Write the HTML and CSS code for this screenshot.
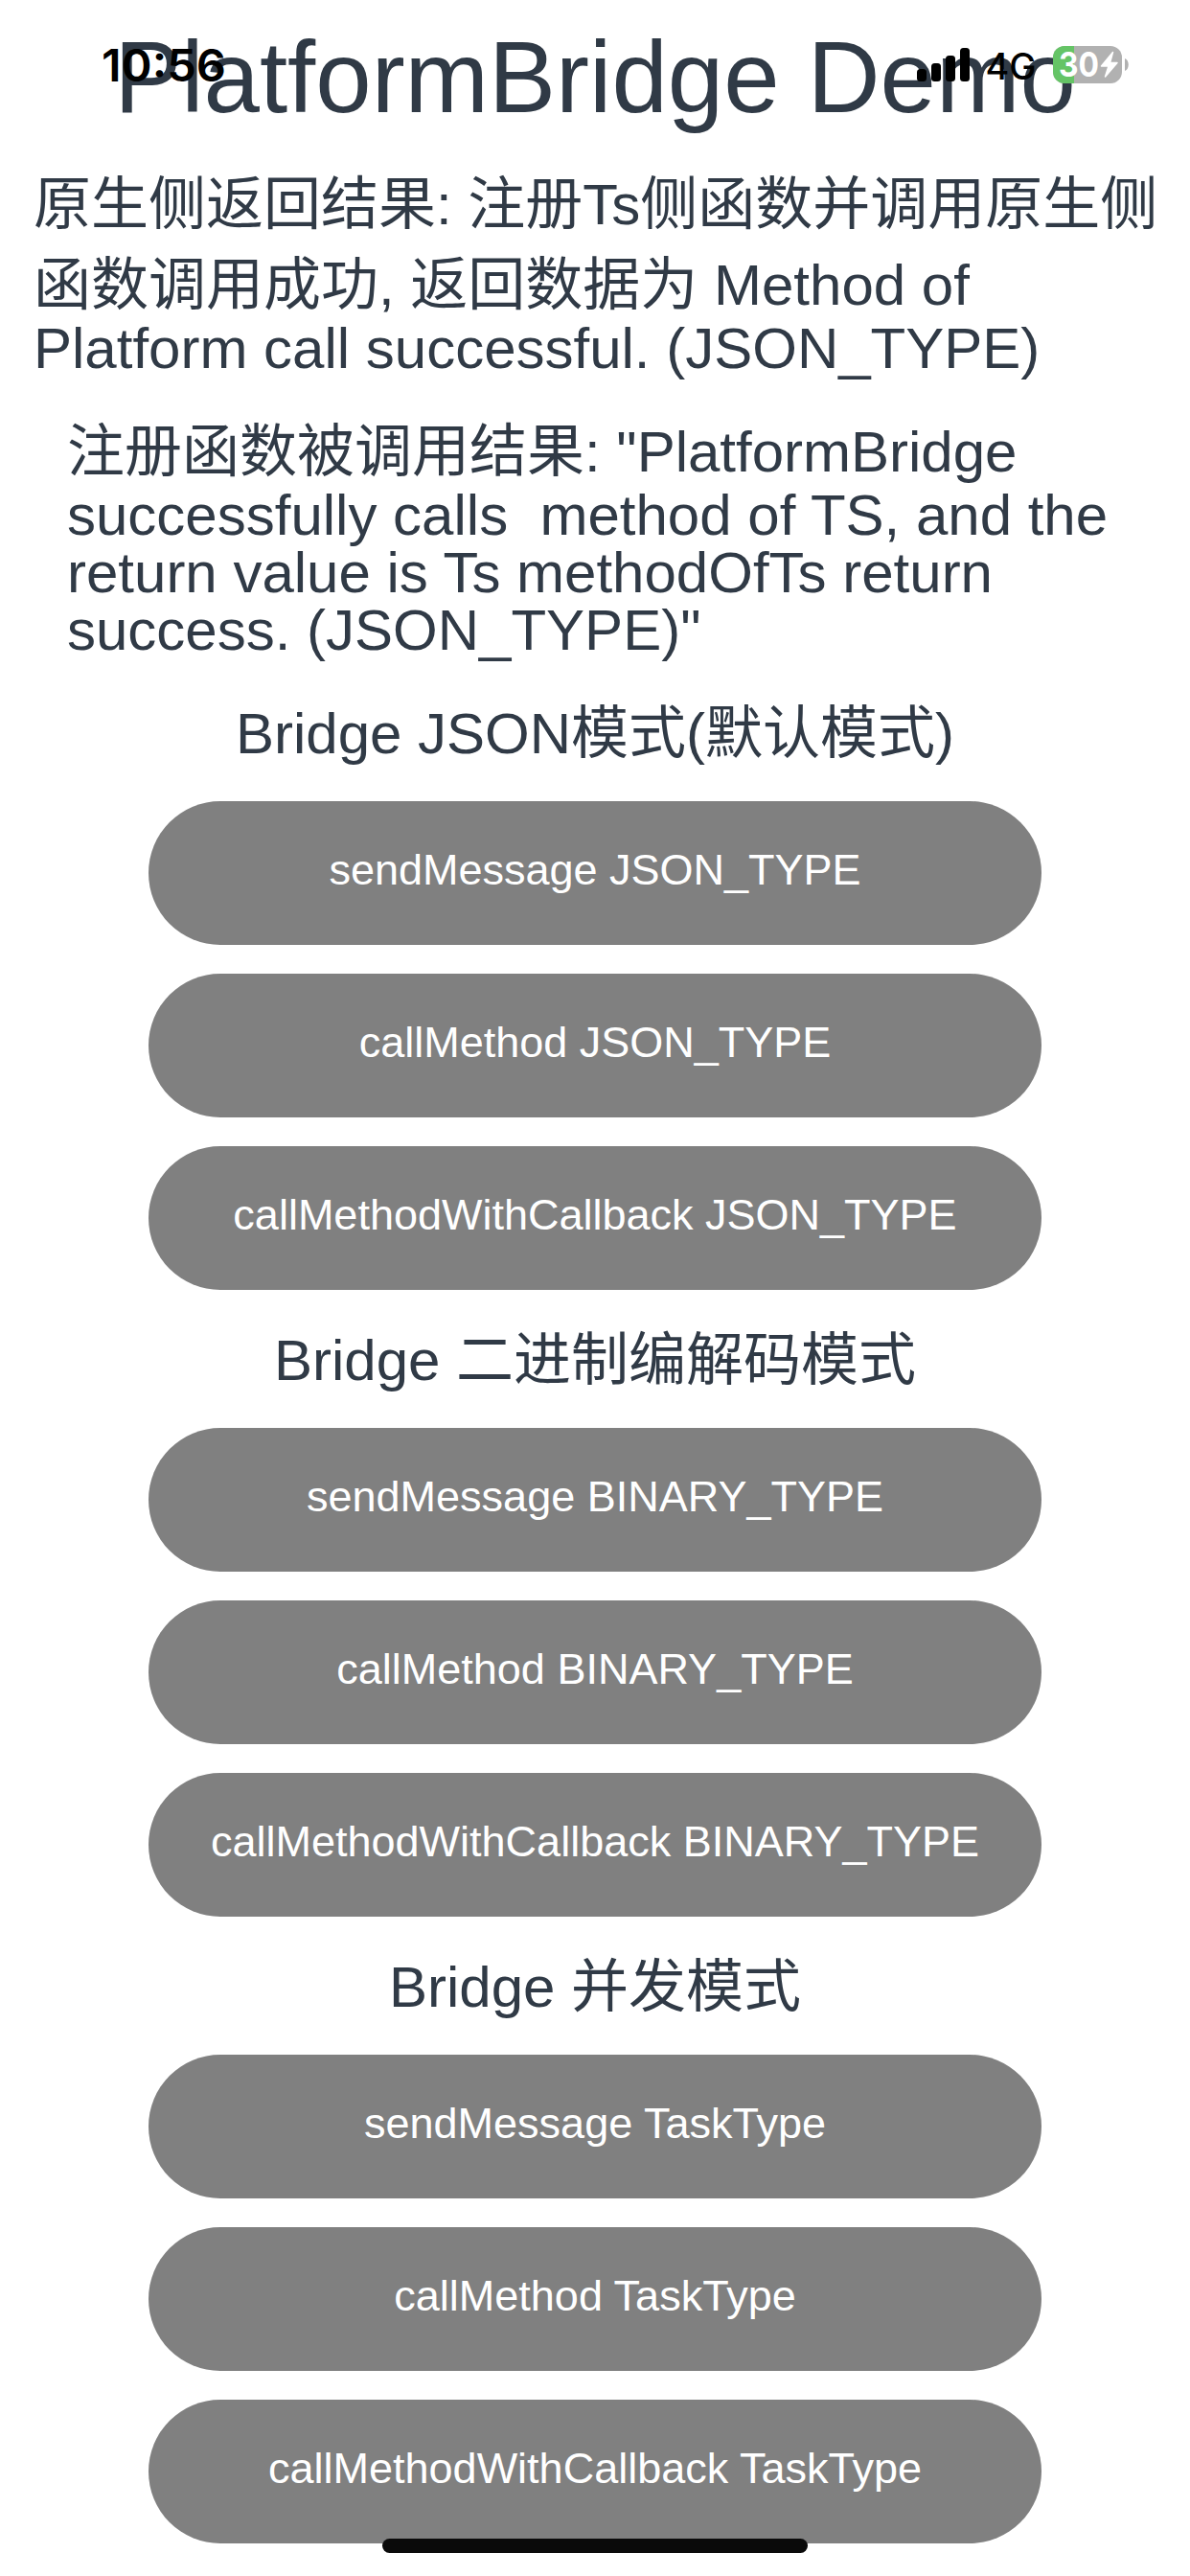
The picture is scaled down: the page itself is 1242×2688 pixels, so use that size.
FILE: index.html
```html
<!DOCTYPE html>
<html lang="zh-CN">
<head>
<meta charset="utf-8">
<title>PlatformBridge Demo</title>
<link rel="stylesheet" href="styles.css">
</head>
<body>
<main class="page">
  <h1 class="title">PlatformBridge Demo</h1>
  <p class="result result-native">
    <span class="line tall">原生侧返回结果: 注册Ts侧函数并调用原生侧</span>
    <span class="line tall">函数调用成功, 返回数据为 Method of</span>
    <span class="line short">Platform call successful. (JSON_TYPE)</span>
  </p>
  <p class="result result-ts">
    <span class="line first">注册函数被调用结果: "PlatformBridge</span>
    <span class="line">successfully calls  method of TS, and the</span>
    <span class="line">return value is Ts methodOfTs return</span>
    <span class="line">success. (JSON_TYPE)"</span>
  </p>
  <section class="group">
    <h2 class="heading">Bridge JSON模式(默认模式)</h2>
    <button class="action">sendMessage JSON_TYPE</button>
    <button class="action">callMethod JSON_TYPE</button>
    <button class="action">callMethodWithCallback JSON_TYPE</button>
  </section>
  <section class="group">
    <h2 class="heading">Bridge 二进制编解码模式</h2>
    <button class="action">sendMessage BINARY_TYPE</button>
    <button class="action">callMethod BINARY_TYPE</button>
    <button class="action">callMethodWithCallback BINARY_TYPE</button>
  </section>
  <section class="group">
    <h2 class="heading">Bridge 并发模式</h2>
    <button class="action">sendMessage TaskType</button>
    <button class="action">callMethod TaskType</button>
    <button class="action">callMethodWithCallback TaskType</button>
  </section>
</main>

<div class="status-bar">
  <svg class="status-icons" viewBox="0 0 1242 132" width="1242" height="132">
    <text class="time" x="106" y="85" textLength="130" lengthAdjust="spacingAndGlyphs">10:56</text>
    <rect x="957" y="72" width="10" height="13" rx="3.5"/>
    <rect x="972" y="66" width="10" height="19" rx="3.5"/>
    <rect x="987" y="58" width="10" height="27" rx="3.5"/>
    <rect x="1002" y="50" width="10" height="35" rx="3.5"/>
    <text class="network" x="1028.500" y="83" textLength="53" lengthAdjust="spacingAndGlyphs">4G</text>
    <clipPath id="cell"><rect x="1099" y="48" width="72" height="39" rx="12"/></clipPath>
    <g clip-path="url(#cell)">
      <rect class="cell-empty" x="1099" y="48" width="72" height="39"/>
      <rect class="cell-full" x="1099" y="48" width="22" height="39"/>
    </g>
    <path class="cell-empty" d="M1174 61C1179 62.500 1179 72.500 1174 74Z"/>
    <text class="percent" x="1105" y="80" textLength="42" lengthAdjust="spacingAndGlyphs">30</text>
    <path class="bolt" d="M1161.500 54.500L1149.500 69H1157L1153.500 80L1166 65.500H1158.500Z"/>
  </svg>
</div>
<div class="home-indicator"></div>
</body>
</html>
```
FILE: styles.css
```css
* {
  box-sizing: border-box;
}

body {
  margin: 0;
  position: relative;
  width: 1242px;
  height: 2688px;
  overflow: hidden;
  background: #fff;
  color: #303a46;
  font-family: "Liberation Sans", "Noto Sans CJK SC", sans-serif;
}

.page {
  display: flex;
  flex-direction: column;
  padding-top: 21px;
}

.title,
.heading,
.result {
  margin: 0;
  font-weight: 400;
}

.title {
  font-size: 105px;
  line-height: 120px;
  text-align: center;
}

.result {
  font-size: 60px;
  white-space: pre;
  display: flex;
  flex-direction: column;
}

.result-native {
  margin-top: 31px;
  padding-left: 35px;
}

.result-ts {
  margin-top: 47px;
  padding-left: 70px;
}

.line {
  line-height: 60px;
}

.line.first {
  line-height: 72px;
}

.line.tall {
  line-height: 83.5px;
}

.line.short {
  line-height: 50px;
}

.group {
  display: flex;
  flex-direction: column;
  align-items: center;
  gap: 30px;
  margin-top: 31.5px;
}

.result + .group {
  margin-top: 35.5px;
}

.heading {
  margin-bottom: -1.5px;
  font-size: 60px;
  line-height: 84px;
}

.action {
  width: 931.5px;
  height: 150px;
  padding: 0 0 6px;
  border: 0;
  border-radius: 75px;
  background: #808080;
  color: #fff;
  font: 45px/1.2 "Liberation Sans", sans-serif;
}

.status-bar {
  position: absolute;
  top: 0;
  left: 0;
}

.status-icons {
  display: block;
  font-family: Inter, sans-serif;
}

.time {
  font-size: 47px;
  font-weight: 600;
}

.network {
  font-size: 38px;
  font-weight: 500;
}

.percent {
  font-size: 36px;
  font-weight: 700;
  fill: #fff;
}

.bolt {
  fill: #fff;
  stroke: #fff;
  stroke-width: 1.5;
  stroke-linejoin: round;
}

.cell-empty {
  fill: #b1b1b1;
}

.cell-full {
  fill: #65c466;
}

.home-indicator {
  position: absolute;
  left: 399px;
  top: 2649px;
  width: 444px;
  height: 15px;
  border-radius: 7.5px;
  background: #0a0a0a;
}
```
